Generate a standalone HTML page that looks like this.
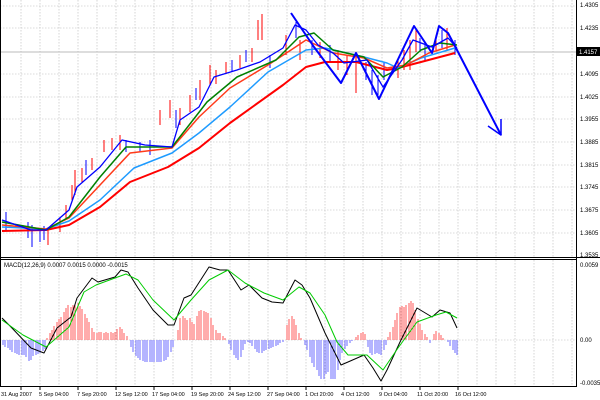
<!DOCTYPE html>
<html><head><meta charset="utf-8"><style>
html,body{margin:0;padding:0;background:#fff;width:600px;height:400px;overflow:hidden}
text{font-family:"Liberation Sans",sans-serif;font-size:6px;fill:#000}
.t text{font-size:5.5px}
</style></head><body>
<svg width="600" height="400" viewBox="0 0 600 400" xmlns="http://www.w3.org/2000/svg">
<rect width="600" height="400" fill="#fff"/>
<g stroke="#b8b8b8" stroke-width="0.6" stroke-dasharray="1.5,1.5">
<path d="M21 0V257M40 0V257M59 0V257M78 0V257M97 0V257M116 0V257M135 0V257M154 0V257M173 0V257M192 0V257M211 0V257M230 0V257M249 0V257M268 0V257M287 0V257M306 0V257M325 0V257M344 0V257M363 0V257M382 0V257M401 0V257M420 0V257M439 0V257M458 0V257M477 0V257M496 0V257M515 0V257M534 0V257M553 0V257M572 0V257"/>
<path d="M0 6H576M0 28H576M0 74H576M0 97H576M0 119H576M0 142H576M0 165H576M0 187H576M0 210H576M0 233H576"/>
<path d="M21 260V386M40 260V386M59 260V386M78 260V386M97 260V386M116 260V386M135 260V386M154 260V386M173 260V386M192 260V386M211 260V386M230 260V386M249 260V386M268 260V386M287 260V386M306 260V386M325 260V386M344 260V386M363 260V386M382 260V386M401 260V386M420 260V386M439 260V386M458 260V386M477 260V386M496 260V386M515 260V386M534 260V386M553 260V386M572 260V386"/>
<path d="M0 340H576"/>
</g>
<line x1="0" y1="52" x2="576" y2="52" stroke="#bbb" stroke-width="1"/>
<g stroke-width="1">
<path stroke="#ff0000" d="M262 14V40M356 53V93M75 170V195M180 108V125M300 40V60M210 65V85M120 135V150M410 40V70M447 28V50M48 228V245M60 218V232M66 205V220M72 185V200M82 168V182M92 158V170M104 140V152M112 138V150M160 110V125M170 100V118M190 95V112M200 80V100M216 70V84M226 62V74M240 55V68M252 48V62M258 20V40M286 35V55M320 42V58M338 50V70M347 55V75M398 60V78M404 50V70M416 30V52M436 35V50"/>
<path stroke="#0000ff" d="M32 225V247M40 228V242M150 140V155M270 55V68M330 45V62M372 70V95M425 45V60M455 40V55M6 212V230M28 222V238M44 226V240M86 160V175M126 140V152M140 142V152M176 110V128M196 88V100M232 60V72M246 50V62M296 22V38M312 40V55M366 62V80M378 75V95M384 62V80M420 38V52M442 30V48"/>
</g>
<g fill="none" stroke-linejoin="round">
<polyline stroke="#ff0000" stroke-width="2" points="2,231 46,230 69,225 100,207 130,182 168,167 199,148 230,123 283,85 306,67 325,62 356,62 387,70 398,68 421,62 455,53"/>
<polyline stroke="#1e9bff" stroke-width="1.5" points="2,227 46,229 69,221 100,200 134,168 172,153 199,133 230,107 268,72 306,50 325,48 364,57 387,63 398,68 421,58 455,48"/>
<polyline stroke="#ff3a1a" stroke-width="1.5" points="2,225 46,229 69,218 100,185 130,153 172,148 199,117 230,88 268,65 291,50 306,40 333,53 364,58 387,68 406,65 429,53 455,45"/>
<polyline stroke="#008000" stroke-width="1.5" points="2,222 46,230 69,217 100,177 126,147 172,147 207,102 237,77 276,60 299,37 314,33 333,50 364,57 383,77 402,67 421,50 440,43 457,45"/>
<polyline stroke="#0000ff" stroke-width="1.3" points="2,220 31,230 46,230 69,210 77,187 100,167 122,140 145,145 172,147 180,120 199,107 214,77 237,70 260,62 283,48 295,25 306,30 318,45 333,53 344,63 367,60 383,87 402,60 413,40 432,47 448,38 457,48"/>
<polyline stroke="#0000ff" stroke-width="2" points="291,13 314,47 341,83 356,53 379,99 414,26 432,53 439,26 448,33 457,50 501,135"/>
<polyline stroke="#0000ff" stroke-width="1.5" points="488,126 501,135 501,119"/>
</g>
<line x1="0" y1="257.5" x2="600" y2="257.5" stroke="#000" stroke-width="1"/>
<line x1="0" y1="259.5" x2="577" y2="259.5" stroke="#000" stroke-width="1"/>
<line x1="0" y1="386.5" x2="577" y2="386.5" stroke="#000" stroke-width="1"/>
<line x1="576.5" y1="0" x2="576.5" y2="387" stroke="#000" stroke-width="1"/>
<line x1="0.5" y1="0" x2="0.5" y2="387" stroke="#000" stroke-width="1"/>
<g>
<text x="580" y="7">1.4305</text><text x="580" y="30">1.4235</text>
<text x="580" y="76">1.4095</text><text x="580" y="99">1.4025</text><text x="580" y="121">1.3955</text>
<text x="580" y="144">1.3885</text><text x="580" y="167">1.3815</text><text x="580" y="189">1.3745</text>
<text x="580" y="212">1.3675</text><text x="580" y="235">1.3605</text><text x="580" y="257">1.3535</text>
</g>
<rect x="577" y="47" width="23" height="9" fill="#000"/>
<text x="579" y="54" style="fill:#fff">1.4157</text>
<path stroke="#ff5a5a" stroke-width="1" d="M47 340V338M50 340V333M52 340V330M54 340V326M57 340V322M59 340V319M61 340V317M64 340V312M66 340V308M68 340V305M71 340V307M73 340V305M75 340V304M78 340V303M80 340V306M82 340V309M85 340V314M87 340V318M89 340V322M92 340V328M94 340V332M97 340V333M99 340V332M101 340V332M104 340V333M106 340V332M108 340V333M111 340V332M113 340V333M115 340V332M117 340V329M120 340V327M122 340V329M124 340V333M127 340V336M178 340V330M180 340V318M183 340V316M185 340V318M187 340V320M190 340V318M192 340V322M194 340V324M197 340V316M199 340V311M201 340V310M204 340V311M206 340V312M208 340V313M211 340V318M213 340V325M216 340V330M218 340V333M220 340V333M223 340V336M225 340V338M287 340V325M289 340V319M292 340V316M294 340V319M296 340V325M299 340V333M301 340V338M356 340V337M358 340V335M361 340V333M363 340V332M365 340V334M388 340V337M390 340V332M393 340V327M395 340V320M397 340V313M400 340V307M402 340V306M404 340V307M406 340V305M409 340V303M411 340V301M413 340V303M415 340V310M418 340V319M420 340V324M422 340V330M425 340V334M427 340V337M434 340V334M436 340V331M439 340V333M441 340V335M443 340V338"/>
<path stroke="#6a6aff" stroke-width="1" d="M3 340V345M5 340V347M8 340V348M10 340V350M12 340V352M15 340V353M17 340V354M19 340V355M22 340V355M24 340V355M26 340V357M29 340V361M31 340V360M33 340V356M36 340V355M38 340V354M40 340V353M43 340V351M45 340V349M131 340V347M133 340V352M136 340V356M138 340V358M140 340V360M143 340V361M145 340V362M147 340V362M150 340V362M152 340V362M154 340V362M157 340V362M159 340V362M161 340V362M164 340V361M166 340V360M168 340V357M171 340V352M173 340V347M229 340V344M231 340V350M234 340V355M236 340V358M238 340V360M241 340V357M243 340V350M245 340V344M248 340V342M250 340V343M252 340V346M255 340V349M257 340V352M259 340V353M262 340V353M264 340V351M266 340V350M269 340V349M271 340V348M273 340V347M276 340V346M278 340V345M280 340V343M283 340V342M305 340V345M307 340V350M310 340V357M312 340V363M314 340V367M317 340V370M319 340V376M321 340V379M324 340V379M326 340V374M328 340V372M331 340V379M333 340V379M335 340V379M338 340V370M340 340V360M342 340V353M345 340V349M347 340V346M350 340V343M352 340V341M368 340V347M370 340V353M372 340V355M375 340V354M377 340V353M379 340V354M381 340V355M384 340V350M386 340V345M430 340V343M448 340V342M450 340V346M453 340V350M455 340V353M457 340V355"/>
<g fill="none" stroke-linejoin="round" stroke-width="1">
<polyline stroke="#000" points="2,318 11,327 31,348 44,353 57,328 71,317 77,298 92,278 98,282 115,277 121,270 128,272 138,288 153,310 168,325 174,325 184,298 191,295 209,267 220,270 228,270 241,290 249,285 262,298 272,302 283,303 295,280 302,285 310,298 325,333 341,365 348,362 364,355 373,368 381,381 387,370 400,342 417,308 432,317 440,310 450,313 457,328"/>
<polyline stroke="#00cc00" points="2,320 23,335 46,347 69,327 84,292 96,285 115,278 126,274 138,280 153,300 174,320 191,300 209,280 228,270 245,283 264,293 283,300 299,287 310,293 325,315 337,342 348,355 367,355 383,370 398,348 417,322 436,315 446,312 457,318"/>
</g>
<text x="4" y="267">MACD(12,26,9) 0.0007 0.0015 0.0000 -0.0015</text>
<text x="580" y="267">0.0059</text>
<text x="580" y="342">0.00</text>
<text x="580" y="385">-0.0035</text>
<g stroke="#000" stroke-width="1"><path d="M21 387V390M40 387V390M78 387V390M116 387V390M154 387V390M192 387V390M230 387V390M268 387V390M306 387V390M344 387V390M382 387V390M420 387V390M458 387V390"/></g>
<g class="t">
<text x="1" y="396">31 Aug 2007</text><text x="39" y="396">5 Sep 04:00</text><text x="77" y="396">7 Sep 20:00</text>
<text x="115" y="396">12 Sep 12:00</text><text x="152" y="396">17 Sep 04:00</text><text x="191" y="396">19 Sep 20:00</text>
<text x="228" y="396">24 Sep 12:00</text><text x="267" y="396">27 Sep 04:00</text><text x="305" y="396">1 Oct 20:00</text>
<text x="341" y="396">4 Oct 12:00</text><text x="379" y="396">9 Oct 04:00</text><text x="417" y="396">11 Oct 20:00</text>
<text x="455" y="396">16 Oct 12:00</text>
</g>
</svg>
</body></html>
